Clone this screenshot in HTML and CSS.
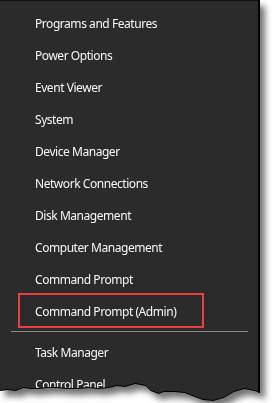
FILE: index.html
```html
<!DOCTYPE html>
<html lang="en">
<head>
    <meta charset="UTF-8">
    <meta name="viewport" content="width=device-width, initial-scale=1.0">
    <title>Quick Link Menu</title>
    <link rel="stylesheet" href="styles.css">
</head>
<body>
    <div class="shadow">
        <div class="menu">
            <ul class="menu-list">
                <li class="menu-item">Programs and Features</li>
                <li class="menu-item">Power Options</li>
                <li class="menu-item">Event Viewer</li>
                <li class="menu-item">System</li>
                <li class="menu-item">Device Manager</li>
                <li class="menu-item">Network Connections</li>
                <li class="menu-item">Disk Management</li>
                <li class="menu-item">Computer Management</li>
                <li class="menu-item">Command Prompt</li>
                <li class="menu-item marked">Command Prompt (Admin)</li>
            </ul>
            <hr class="separator">
            <ul class="menu-list">
                <li class="menu-item">Task Manager</li>
                <li class="menu-item">Control Panel</li>
            </ul>
        </div>
    </div>
</body>
</html>
```

FILE: styles.css
```css
*{
    padding: 0;
    margin: 0;
    box-sizing: border-box;
}

:root {
    --menu-color: #2b2b2b;
    --text-color: #f7f7f7;
    --line-color: #8a8a8a;
    --mark-color: #e8413f;
}

body {
    background-color: #ffffff;
    font-family: "Noto Sans", "Open Sans", sans-serif;
    font-size: 12px;
    letter-spacing: -0.45px;
    width: 275px;
    height: 403px;
    overflow: hidden;
}

/* torn paper edge gets its outline and shadow from these filters */
.shadow {
    width: 260px;
    filter: drop-shadow(0 1px 0 #000) drop-shadow(5px 6px 3px rgba(0, 0, 0, 0.55));
}

.menu {
    height: 403px;
    background-color: var(--menu-color);
    border-top: 1px solid #111;
    border-right: 2px solid #000;
    padding-top: 7px;
    clip-path: polygon(0 0, 100% 0, 100% 392px, 98% 390px, 94% 388px, 90% 391px, 86% 397px, 82% 400px, 78% 399px, 75% 396px, 71% 392px, 67% 391px, 63% 391px, 61% 393px, 58% 390px, 56% 385px, 52% 383px, 48% 386px, 45% 385px, 42% 387px, 38% 388px, 34% 387px, 30% 388px, 26% 388px, 22% 387px, 18% 387px, 15% 388px, 12% 388px, 9% 387px, 6% 390px, 3% 389px, 0 390px);
}

.menu-list {
    list-style: none;
}

.menu-item {
    height: 32px;
    line-height: 32px;
    padding-left: 35px;
    color: var(--text-color);
    white-space: nowrap;
}

.marked {
    position: relative;
}

.marked::after {
    content: "";
    position: absolute;
    top: -3px;
    left: 18px;
    width: 182px;
    height: 31px;
    border: 2px solid var(--mark-color);
}

.separator {
    border: none;
    border-top: 1px solid var(--line-color);
    margin: 3px 10px 5px 11px;
}
```
